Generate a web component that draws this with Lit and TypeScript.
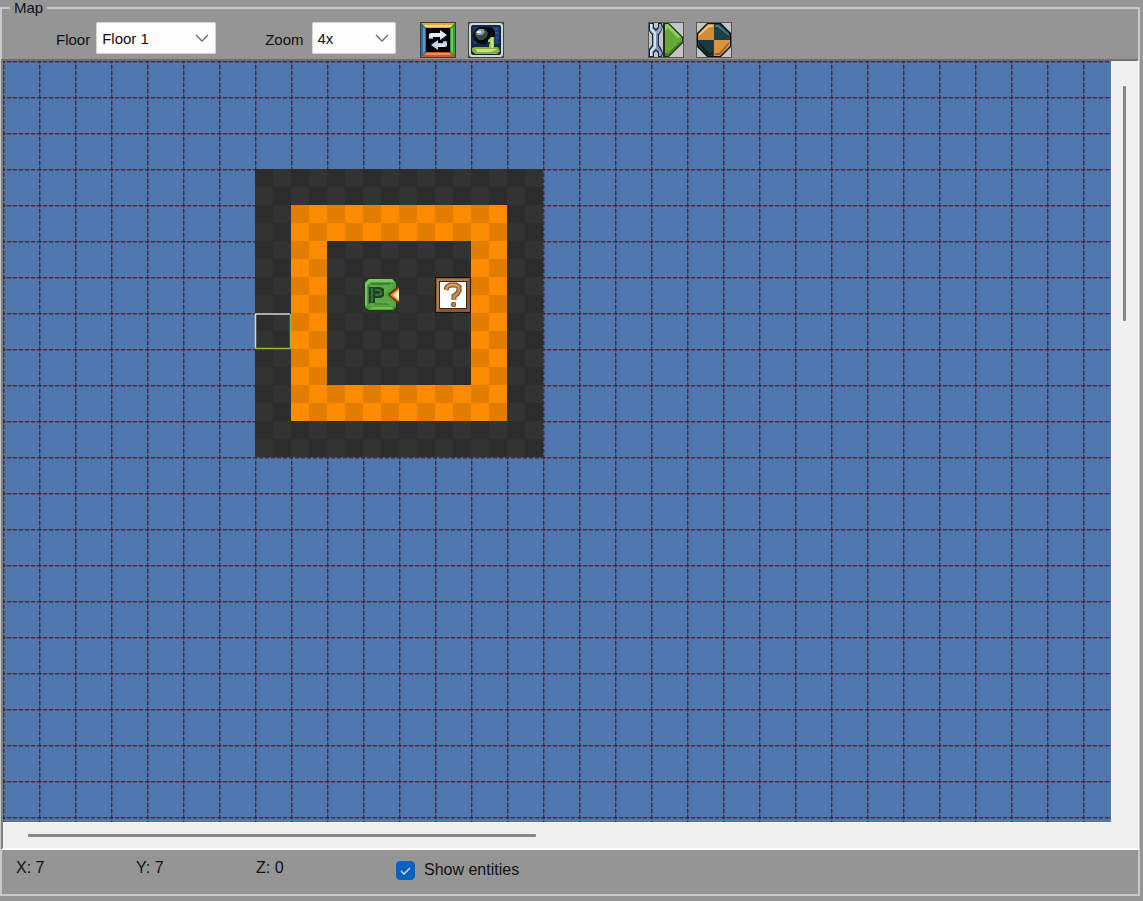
import { LitElement, html, svg, css } from "lit";
import { customElement, state } from "lit/decorators.js";

const TILE = 36;

interface Area {
  x: number;
  y: number;
  size: number;
  fill: string;
}

const AREAS: Area[] = [
  { x: 7, y: 3, size: 8, fill: "#333334" },
  { x: 8, y: 4, size: 6, fill: "#ff8c00" },
  { x: 9, y: 5, size: 4, fill: "#333334" },
];

const swapIcon = html`<svg viewBox="0 0 36 36" aria-hidden="true">
  <rect width="36" height="36" fill="#3c3c3c" />
  <path d="M1 1H35L29 7H7Z" fill="#d8b038" />
  <path d="M3 3H33L31 5H5Z" fill="#f2dc70" />
  <path d="M1 1L7 7V29L1 35Z" fill="#2c6ca8" />
  <path d="M3 5L5 7V29L3 32Z" fill="#5c9ccc" />
  <path d="M35 1L29 7V29L35 35Z" fill="#35983a" />
  <path d="M33 5L31 7V29L33 32Z" fill="#66d058" />
  <path d="M1 35L7 29H29L35 35Z" fill="#c8582c" />
  <path d="M4 33L7 31H29L32 33Z" fill="#ec9058" />
  <rect x="6" y="6" width="24" height="24" fill="#040406" />
  <path d="M9 17V12L11 11H20V8L27 13L20 18V15H13V17Z" fill="#dfe8f6" />
  <path d="M27 19V24L25 25H18V28L11 23L18 18V21H23V19Z" fill="#c6d4ea" />
  <path d="M11 12H21M18 24H25" stroke="#fff" />
  <path d="M9 16.500H13M23 19.500H27" stroke="#8296b4" />
</svg>`;

const fillIcon = html`<svg viewBox="0 0 36 36" aria-hidden="true">
  <rect width="36" height="36" fill="#444" />
  <rect x="1" y="1" width="34" height="34" rx="3" fill="#cdd6d2" />
  <rect x="3" y="3" width="30" height="30" rx="2" fill="#14254c" />
  <path d="M5 5H31V22H5Z" fill="#213c70" />
  <path d="M24 7H30M27 11H31M28 16H31" stroke="#2e5288" stroke-width="2" />
  <path d="M4 26L7 25H21V22H26V25H30L32 29L29 32H7L4 29Z" fill="#86b040" />
  <path d="M8 27H27L29 28L22 30H9Z" fill="#c6e474" />
  <path d="M7 8L11 5H19L25 6L27 10V15L22 18L18 22H11L6 18L5 12Z" fill="#05080b" />
  <path d="M7 10L11 7H17L20 11L19 15L15 18H11L7 14Z" fill="#39474c" />
  <path d="M8 10L11 7H15L17 10L14 13H9Z" fill="#92a4a2" />
  <path d="M9 9H13V11H9Z" fill="#e2ece6" />
  <path d="M20 18L23 15H26V26H22V20H20Z" fill="#a9d050" />
  <path d="M24 16V26" stroke="#daf494" />
</svg>`;

const testIcon = html`<svg viewBox="0 0 36 36" aria-hidden="true">
  <rect width="36" height="36" fill="#555" />
  <rect x="1" y="1" width="34" height="34" fill="#c5c5c5" />
  <path d="M1 1H6V5L8 7L10 5V1H14L15 5L13 10L11 13V23L13 26L15 31L14 35H10V31L8 29L6 31V35H1V27L4 23V13L1 9Z" fill="#1c2436" />
  <path d="M2 2H5V6L8 9L11 6V2H13L14 6L12 10L10 12V24L12 27L14 31L13 34H11V30L8 27L5 30V34H2V28L5 24V12L2 9Z" fill="#94a8cc" />
  <path d="M3 2V7L7 11V25L3 29V34" fill="none" stroke="#eef4ff" stroke-width="1.500" />
  <path d="M9 12V25L12 29" fill="none" stroke="#5b6f98" />
  <path d="M15 1H21L35 15V21L21 35H15Z" fill="#1c3012" />
  <path d="M17 2H20L34 16V20L20 34H17Z" fill="#68a83a" />
  <path d="M17 2H20L33 15L30 16L20 6L17 9Z" fill="#94cc5c" />
  <path d="M17 31L20 31L33 19V21L20 34H17Z" fill="#44782a" />
</svg>`;

const markerIcon = html`<svg viewBox="0 0 36 36" aria-hidden="true">
  <rect width="36" height="36" fill="#555" />
  <rect x="1" y="1" width="34" height="34" fill="#c5c5c5" />
  <path d="M11 1H25L35 11V25L25 35H11L1 25V11Z" fill="#0c0f10" />
  <path d="M12 2H18V18H2V12Z" fill="#d08c38" />
  <path d="M18 2H24L34 12V18H18Z" fill="#1e4048" />
  <path d="M2 18H18V34H12L2 24Z" fill="#1d3a40" />
  <path d="M18 18H34V24L24 34H18Z" fill="#d89440" />
  <path d="M12 3L3 12V14L13 5H17V3Z" fill="#f0c888" />
  <path d="M23 3L33 12V14L22 5H19V3Z" fill="#4d7680" />
  <path d="M3 22L12 33H17V31H13L3 20Z" fill="#0e2227" />
  <path d="M33 22L24 33H19V31H23L33 20Z" fill="#a06428" />
</svg>`;

const chevron = html`<svg class="chevron" viewBox="0 0 14 8" aria-hidden="true">
  <path d="M1 1L7 7L13 1" fill="none" stroke="#6a6a6a" stroke-width="1.300" />
</svg>`;

const playerSprite = svg`
  <path d="M5 1H30L34 5V31L30 35H6L1 31V5Z" fill="#1c3c20"/>
  <path d="M6 2H29L33 6V11L25 17L33 25V30L30 33H6L2 30V6Z" fill="#529e3e"/>
  <path d="M6 2H29L32 5H8L4 8V29L2 28V6Z" fill="#7cc464"/>
  <path d="M8 7H29L31 9L22 17L31 27V29H9L6 27V9Z" fill="#5aaa46"/>
  <path d="M8 7H27M6 9V27" fill="none" stroke="#34783a" stroke-width="1.500"/>
  <path d="M8 31H29" stroke="#76bc50" stroke-width="2"/>
  <path d="M11 28H27L24 26H12Z" fill="#438a3a"/>
  <path d="M6 10H18L21 12V19L18 21H12V26H6Z" fill="#1d4424"/>
  <path d="M9 11V25M12 13H16L18 15V17L16 18H12" fill="none" stroke="#438238" stroke-width="1.500"/>
  <path d="M36 9L25 18L36 27Z" fill="#8c2c0c"/>
  <path d="M36 11L27 18L36 25Z" fill="#ee8a30"/>
  <path d="M36 13L30 18L36 23Z" fill="#fff0bc"/>`;

const unknownSprite = svg`
  <rect width="36" height="36" fill="#140f14"/>
  <rect x="1" y="1" width="34" height="34" fill="#8c5a34"/>
  <path d="M2 2H34L32 4H4V32L2 34Z" fill="#b07c4c"/>
  <rect x="4" y="4" width="28" height="28" fill="#3c2414"/>
  <rect x="5" y="5" width="26" height="26" fill="#fff"/>
  <path d="M11 13L12 10L15 8H21L24 10V14L22 17L19 19V23" fill="none" stroke="#5c4834" stroke-width="5"/>
  <path d="M11 13L12 10L15 8H21L24 10V14L22 17L19 19V23" fill="none" stroke="#cc8c40" stroke-width="3"/>
  <path d="M12 10L15 8H20L23 10" fill="none" stroke="#e8b870"/>
  <rect x="16" y="25" width="5" height="5" rx="2" fill="#5c4834"/>
  <rect x="17" y="26" width="3" height="3" rx="1" fill="#cc8c40"/>`;

@customElement("map-canvas")
export class MapCanvas extends LitElement {
  static properties = { entities: { type: Boolean } };
  declare entities: boolean;

  static styles = css`
    :host {
      display: block;
      overflow: hidden;
      min-width: 0;
      min-height: 0;
      background: #5077ae;
    }
    .map {
      display: block;
      width: 100%;
      height: 100%;
    }
  `;

  render() {
    return html`<svg class="map" role="img" aria-label="Floor map">
      <defs>
        <pattern id="grid" width="36" height="36" patternUnits="userSpaceOnUse">
          <path d="M0.5 0V36M0 0.5H36" stroke="#4c5f92" stroke-width="1" />
          <path d="M0 1H36M1 0V36" stroke="#50263a" stroke-opacity="0.45" stroke-width="2" stroke-dasharray="4 2" stroke-dashoffset="2" />
          <path d="M0 0.5H36M0.5 0V36" stroke="#50263a" stroke-dasharray="4 2" stroke-dashoffset="2" />
          <rect width="2" height="2" fill="#45283c" />
        </pattern>
        <pattern id="checks" width="36" height="36" patternUnits="userSpaceOnUse">
          <path d="M0 0H18V18H0ZM18 18H36V36H18Z" fill="#000" fill-opacity="0.11" />
        </pattern>
      </defs>
      <rect width="100%" height="100%" fill="url(#grid)" />
      ${AREAS.map(
        (a) => svg`<rect x=${a.x * TILE} y=${a.y * TILE} width=${a.size * TILE} height=${a.size * TILE} fill=${a.fill}/>`
      )}
      <rect x="252" y="108" width="288" height="288" fill="url(#checks)" />
      ${this.entities
        ? svg`<g transform="translate(360 216)">${playerSprite}</g>
              <g transform="translate(432 216)">${unknownSprite}</g>`
        : null}
      <path d="M252.500 287V253H287" fill="none" stroke="#d4d8da" stroke-width="1.500" />
      <path d="M252 287.500H287.500V253" fill="none" stroke="#93b548" stroke-width="1.500" />
    </svg>`;
  }
}

@customElement("app-root")
export class AppRoot extends LitElement {
  @state() private showEntities = true;

  static styles = css`
    :host {
      display: flex;
      flex-direction: column;
      box-sizing: border-box;
      height: 100vh;
      padding: 0 3px 5px 0;
      background: #959595;
      color: #111;
      font-family: "Liberation Sans", Arial, sans-serif;
      font-size: 15px;
    }
    .group {
      display: flex;
      flex-direction: column;
      flex: 1;
      min-width: 0;
      min-height: 0;
      margin: 0;
      padding: 0;
      border: 2px solid #c9c9c9;
    }
    .title {
      margin-left: 8px;
      padding: 0 4px;
      line-height: 16px;
    }
    .toolbar {
      display: flex;
      align-items: flex-start;
      box-sizing: border-box;
      height: 43px;
      padding: 6px 0 0 54px;
    }
    .field {
      display: flex;
      align-items: center;
      gap: 6px;
      height: 32px;
      margin-right: 49px;
    }
    .field.zoom {
      gap: 8px;
      margin-right: 24px;
    }
    .caption {
      padding-top: 3px;
    }
    .picker {
      display: grid;
      align-items: center;
      width: 120px;
    }
    .zoom .picker {
      width: 84px;
    }
    .select,
    .chevron {
      grid-area: 1 / 1;
    }
    .select {
      appearance: none;
      width: 100%;
      height: 32px;
      margin: 0;
      padding: 0 24px 0 5px;
      border: 1px solid #d4d4d4;
      border-radius: 2px;
      background: #fdfdfd;
      color: #111;
      font: inherit;
    }
    .chevron {
      justify-self: end;
      width: 14px;
      height: 8px;
      margin-right: 7px;
      pointer-events: none;
    }
    .tools {
      display: flex;
      gap: 12px;
      margin-right: 144px;
    }
    .tool {
      width: 36px;
      height: 36px;
      padding: 0;
      border: 0;
      background: none;
    }
    .tool svg {
      display: block;
      width: 36px;
      height: 36px;
    }
    .viewport {
      display: grid;
      grid-template-columns: minmax(0, 1fr) 26px;
      grid-template-rows: minmax(0, 1fr) 26px;
      flex: 1;
      min-height: 0;
      margin: 0 -1px;
      border: 2px solid;
      border-color: #707070 #f2f2f2 #fff #808080;
      background: #efefef;
    }
    .track {
      display: flex;
      box-sizing: border-box;
    }
    .track.vertical {
      justify-content: center;
      padding: 25px 0;
      border-left: 1px solid #fafafa;
    }
    .track.horizontal {
      align-items: center;
      padding: 0 25px;
      border-top: 1px solid #fafafa;
    }
    .thumb {
      border-radius: 1px;
      background: #868686;
    }
    .vertical .thumb {
      width: 3px;
      height: 33%;
    }
    .horizontal .thumb {
      width: 48%;
      height: 3px;
    }
    .status {
      display: grid;
      grid-template-columns: 120px 120px 140px auto;
      align-items: start;
      box-sizing: border-box;
      height: 44px;
      padding: 8px 0 0 14px;
      font-size: 16px;
      line-height: 20px;
    }
    .check {
      display: flex;
      align-items: center;
      gap: 9px;
      line-height: 24px;
    }
    .box {
      display: grid;
    }
    .tick {
      appearance: none;
      grid-area: 1 / 1;
      width: 19px;
      height: 19px;
      margin: 0;
      border: 1px solid #555;
      border-radius: 4px;
      background: #f5f5f5;
    }
    .tick:checked {
      border-color: #0a62bd;
      background: #0a62bd;
    }
    .mark {
      grid-area: 1 / 1;
      width: 19px;
      height: 19px;
      pointer-events: none;
    }
  `;

  private toggle(e: Event) {
    this.showEntities = (e.target as HTMLInputElement).checked;
  }

  render() {
    return html`<fieldset class="group">
      <legend class="title">Map</legend>
      <div class="toolbar">
        <div class="field">
          <label class="caption" for="floor">Floor</label>
          <div class="picker">
            <select class="select" id="floor">
              <option>Floor 1</option>
            </select>
            ${chevron}
          </div>
        </div>
        <div class="field zoom">
          <label class="caption" for="zoom">Zoom</label>
          <div class="picker">
            <select class="select" id="zoom">
              <option>4x</option>
            </select>
            ${chevron}
          </div>
        </div>
        <div class="tools">
          <button class="tool" type="button" aria-label="Swap">${swapIcon}</button>
          <button class="tool" type="button" aria-label="Fill">${fillIcon}</button>
        </div>
        <div class="tools">
          <button class="tool" type="button" aria-label="Test">${testIcon}</button>
          <button class="tool" type="button" aria-label="Marker">${markerIcon}</button>
        </div>
      </div>
      <div class="viewport">
        <map-canvas .entities=${this.showEntities}></map-canvas>
        <div class="track vertical"><div class="thumb"></div></div>
        <div class="track horizontal"><div class="thumb"></div></div>
      </div>
      <div class="status">
        <span>X: 7</span>
        <span>Y: 7</span>
        <span>Z: 0</span>
        <label class="check">
          <span class="box">
            <input class="tick" type="checkbox" .checked=${this.showEntities} @change=${this.toggle} />
            <svg class="mark" viewBox="0 0 19 19" aria-hidden="true">
              <path d="M5 10L8 13L14 7" fill="none" stroke="#d4e6fa" stroke-width="1.300" />
            </svg>
          </span>
          Show entities
        </label>
      </div>
    </fieldset>`;
  }
}
